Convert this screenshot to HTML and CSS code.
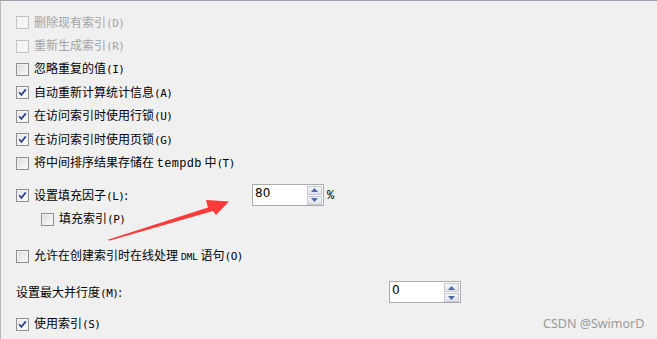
FILE: index.html
```html
<!DOCTYPE html>
<html lang="zh">
<head>
<meta charset="utf-8">
<title>索引选项</title>
<link rel="stylesheet" href="styles.css">
</head>
<body>
<div class="frame">
  <div class="group">
    <div class="row disabled"><span class="cb"></span><span class="lbl">删除现有索引<span class="key">(D)</span></span></div>
    <div class="row disabled"><span class="cb"></span><span class="lbl">重新生成索引<span class="key">(R)</span></span></div>
    <div class="row"><span class="cb"></span><span class="lbl">忽略重复的值<span class="key">(I)</span></span></div>
    <div class="row"><span class="cb checked"><svg viewBox="0 0 11 11" width="11" height="11"><path d="M2.2 5.2 L4.4 7.8 L8.8 2.4" fill="none" stroke="#2b3f93" stroke-width="1.7"/></svg></span><span class="lbl">自动重新计算统计信息<span class="key">(A)</span></span></div>
    <div class="row"><span class="cb checked"><svg viewBox="0 0 11 11" width="11" height="11"><path d="M2.2 5.2 L4.4 7.8 L8.8 2.4" fill="none" stroke="#2b3f93" stroke-width="1.7"/></svg></span><span class="lbl">在访问索引时使用行锁<span class="key">(U)</span></span></div>
    <div class="row"><span class="cb checked"><svg viewBox="0 0 11 11" width="11" height="11"><path d="M2.2 5.2 L4.4 7.8 L8.8 2.4" fill="none" stroke="#2b3f93" stroke-width="1.7"/></svg></span><span class="lbl">在访问索引时使用页锁<span class="key">(G)</span></span></div>
    <div class="row"><span class="cb"></span><span class="lbl">将中间排序结果存储在 <span class="mono">tempdb</span> 中<span class="key">(T)</span></span></div>
  </div>

  <div class="group g-fill">
    <div class="row">
      <span class="cb checked"><svg viewBox="0 0 11 11" width="11" height="11"><path d="M2.2 5.2 L4.4 7.8 L8.8 2.4" fill="none" stroke="#2b3f93" stroke-width="1.7"/></svg></span>
      <span class="lbl fixed-a">设置填充因子<span class="key">(L)</span>:</span>
      <span class="spin"><span class="val">80</span><span class="btns"><span class="sbtn"><svg viewBox="0 0 7 4" width="7" height="4"><path d="M0 4 L3.5 0 L7 4Z" fill="#5068a8"/></svg></span><span class="sbtn"><svg viewBox="0 0 7 4" width="7" height="4"><path d="M0 0 L3.5 4 L7 0Z" fill="#5068a8"/></svg></span></span></span>
      <span class="pct">%</span>
    </div>
    <div class="row indent"><span class="cb"></span><span class="lbl">填充索引<span class="key">(P)</span></span></div>
  </div>

  <div class="group g-online">
    <div class="row"><span class="cb"></span><span class="lbl">允许在创建索引时在线处理 <span class="mono2">DML</span> 语句<span class="key">(O)</span></span></div>
  </div>

  <div class="group g-dop">
    <div class="row plain">
      <span class="lbl fixed-b">设置最大并行度<span class="key">(M)</span>:</span>
      <span class="spin"><span class="val">0</span><span class="btns"><span class="sbtn"><svg viewBox="0 0 7 4" width="7" height="4"><path d="M0 4 L3.5 0 L7 4Z" fill="#5068a8"/></svg></span><span class="sbtn"><svg viewBox="0 0 7 4" width="7" height="4"><path d="M0 0 L3.5 4 L7 0Z" fill="#5068a8"/></svg></span></span></span>
    </div>
  </div>

  <div class="group g-use">
    <div class="row"><span class="cb checked"><svg viewBox="0 0 11 11" width="11" height="11"><path d="M2.2 5.2 L4.4 7.8 L8.8 2.4" fill="none" stroke="#2b3f93" stroke-width="1.7"/></svg></span><span class="lbl">使用索引<span class="key">(S)</span></span></div>
  </div>

  <svg class="arrow" viewBox="0 0 657 339" width="657" height="339">
    <polygon points="107,240 208,207.5 206,200 229,201.5 216,215 213,211 110,240.5" fill="#fb3a3a"/>
  </svg>
  <div class="watermark">CSDN @SwimorD</div>
</div>
</body>
</html>
```
FILE: styles.css
```css
html, body {
  margin: 0;
  padding: 0;
  background: #f0f0f0;
}
.frame {
  position: relative;
  width: 656px;
  height: 338px;
  border-top: 1px solid #a0a0a8;
  border-left: 1px solid #b8b8b8;
  background: #f0f0f0;
  padding-top: 10px;
  box-sizing: content-box;
  overflow: hidden;
  font-family: "Noto Sans CJK SC", "Noto Sans", sans-serif;
  font-size: 12px;
  color: #000;
}
.group {
  display: flex;
  flex-direction: column;
}
.row {
  height: 23.4px;
  display: flex;
  align-items: center;
  padding-left: 15px;
  white-space: nowrap;
}
.row.indent {
  padding-left: 40px;
}
.g-fill { margin-top: 9.3px; }
.g-online { margin-top: 13.6px; }
.g-dop { margin-top: 13.6px; }
.g-use { margin-top: 7.6px; }

.cb {
  width: 11px;
  height: 11px;
  border: 1px solid #8e8f8f;
  background: linear-gradient(135deg, #d8d8d8 0%, #ececec 50%, #fcfcfc 100%);
  box-shadow: inset 0 0 0 1px #f2f2f2;
  display: inline-flex;
  align-items: center;
  justify-content: center;
  flex: 0 0 auto;
  margin-right: 5px;
}
.cb.checked {
  background: linear-gradient(135deg, #e4e4e4 0%, #f2f2f2 50%, #fdfdfd 100%);
}
.row.disabled .cb {
  border-color: #c2c2c2;
  background: #f5f5f5;
  box-shadow: none;
}
.row.disabled {
  color: #a3a3a3;
}
.lbl {
  line-height: 14px;
}
.key {
  font-family: "DejaVu Sans Mono", "Liberation Mono", monospace;
  font-size: 11px;
  letter-spacing: -0.5px;
}
.mono {
  font-family: "Liberation Mono", monospace;
  font-size: 12px;
  letter-spacing: 0.3px;
}
.mono2 {
  font-family: "Liberation Mono", monospace;
  font-size: 10px;
  letter-spacing: -0.3px;
}
.fixed-a {
  width: 218px;
  flex: 0 0 218px;
}
.fixed-b {
  width: 373px;
  flex: 0 0 373px;
}
.spin {
  width: 70px;
  height: 20px;
  border: 1px solid #ababab;
  background: #fff;
  display: flex;
  justify-content: space-between;
  align-items: flex-start;
  margin-top: -2px;
}
.val {
  font-family: "DejaVu Sans", "Liberation Sans", sans-serif;
  font-size: 12px;
  line-height: 14px;
  padding: 1px 0 0 2px;
  color: #000;
}
.btns {
  display: flex;
  flex-direction: column;
  gap: 1px;
  margin: 1px 1px 0 0;
}
.sbtn {
  width: 13px;
  height: 7px;
  border: 1px solid #c4c8d0;
  background: linear-gradient(#f4f5f8, #dfe2ea);
  display: flex;
  align-items: center;
  justify-content: center;
}
.pct {
  margin-left: 3px;
  font-family: "Liberation Mono", monospace;
  font-size: 12px;
  color: #000;
}
.arrow {
  position: absolute;
  left: -1px;
  top: -1px;
  pointer-events: none;
}
.watermark {
  position: absolute;
  left: 542px;
  top: 314px;
  font-family: "Noto Sans", "Liberation Sans", sans-serif;
  font-size: 12.5px;
  color: #9a9a9a;
}
```
